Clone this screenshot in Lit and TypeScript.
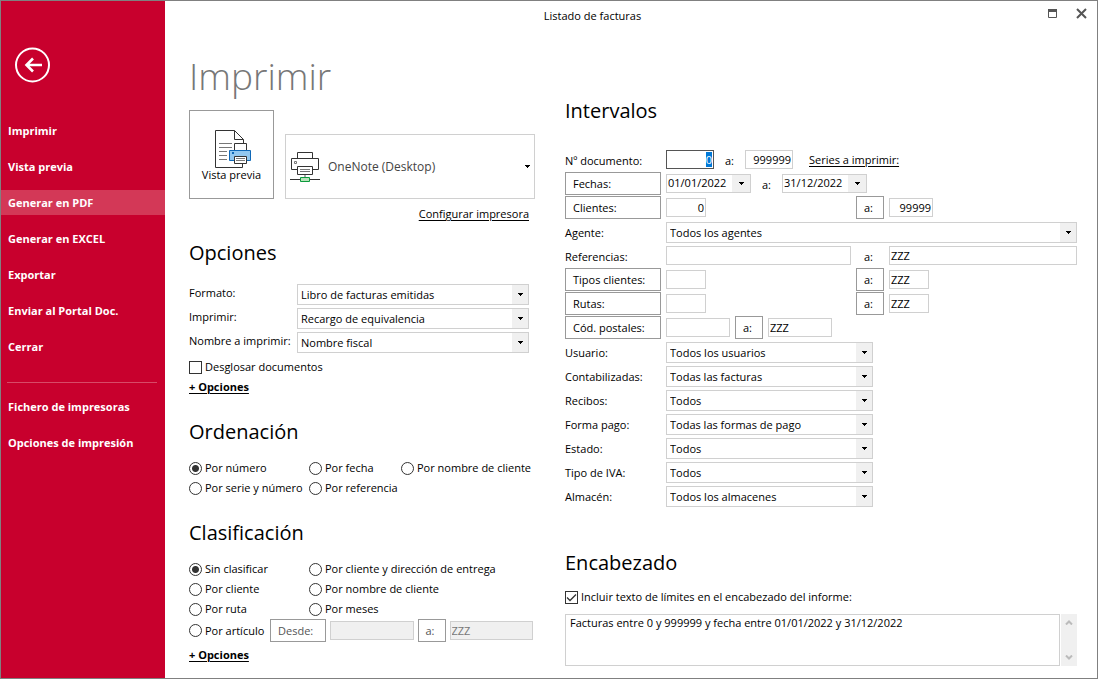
import { LitElement, html, css, svg } from "lit";
import { customElement, state } from "lit/decorators.js";
import { classMap } from "lit/directives/class-map.js";

const previewIcon = svg`<svg class="icon" width="41" height="38" viewBox="-4 0 41 38" fill="none" aria-hidden="true">
  <path d="M28.500 13V9.500L19.500 .500H.500V37.500H27.500V34" stroke="#333" />
  <path d="M19.500 .500V9.500H28.500" stroke="#333" />
  <path d="M4 13.500H17M4 17.500H17M4 21.500H12M4 25.500H12M4 29.500H12" stroke="#777" />
  <path d="M19.500 20.500V13.500H31.500V20.500" stroke="#333" fill="#fff" />
  <path d="M14.500 20.500H35.500V30.500H14.500Z" stroke="#0f68b7" fill="#92c8f0" />
  <path d="M17 22H19V24H17Z" fill="#0f68b7" />
  <path d="M19.500 26.500H31.500V33.500H19.500Z" stroke="#333" fill="#fff" />
  <path d="M21 28.500H30M21 30.500H30" stroke="#777" />
</svg>`;

const printerIcon = svg`<svg class="icon" width="30" height="32" viewBox="0 0 30 32" fill="none" aria-hidden="true">
  <path d="M7.500 7.500V1.500H22.500V7.500" stroke="#333" />
  <path d="M7.500 18.500H1.500V7.500H28.500V18.500H22.500" stroke="#333" />
  <path d="M4.500 10.500H6.500V12.500H4.500Z" stroke="#777" />
  <path d="M7.500 15.500H22.500V23.500H7.500Z" stroke="#333" fill="#fff" />
  <path d="M10 18.500H20M10 20.500H20" stroke="#777" />
  <path d="M15 24V27" stroke="#aaa" stroke-width="2" />
  <path d="M0 28.500H30" stroke="#333" />
  <path d="M10.500 26.500H19.500V30.500H10.500Z" stroke="#0b9a3d" fill="#b9e2ba" />
</svg>`;

@customElement("app-root")
export class AppRoot extends LitElement {
  @state() private active = "Generar en PDF";

  static styles = css`
    :host {
      display: block;
      font-family: "Segoe UI", "Open Sans", "Noto Sans", sans-serif;
      font-size: 11px;
      line-height: 16px;
      color: #000;
    }
    * { box-sizing: border-box; }
    button, input, select, textarea { font: inherit; color: inherit; margin: 0; border-radius: 0; }
    button { cursor: pointer; }
    a { color: #000; text-decoration: underline; text-underline-offset: 2px; }
    .icon { display: block; flex: none; }

    .window {
      display: grid;
      grid-template-columns: 164px minmax(0, 1fr);
      min-height: 100vh;
      border: 1px solid #808080;
      background: #fff;
    }

    .side { background: #c8002d; color: #fff; padding-top: 46px; }
    .back { display: block; margin-left: 13px; padding: 0; border: 0; background: none; }
    .menu { display: flex; flex-direction: column; gap: 11px; }
    .menu.first { margin-top: 35px; }
    .menu.second { margin-top: 11px; }
    .item {
      height: 25px;
      padding: 0 7px;
      border: 0;
      background: none;
      text-align: left;
      font-size: 11px;
      font-weight: 700;
    }
    .item.on { background: #d33857; }
    .rule { margin: 23px 8px 0 6px; border: 0; border-top: 1px solid #d84a67; }

    .bar { display: flex; align-items: flex-start; padding: 7px 10px 0 0; height: 47px; }
    .caption { flex: 1; text-align: center; }
    .tools { display: flex; justify-content: flex-end; gap: 18px; width: 67px; }
    .tool { height: 11px; padding: 0; border: 0; background: none; }
    .tool .icon { margin-top: -1px; }

    .columns {
      display: grid;
      grid-template-columns: 352px minmax(0, 1fr);
      gap: 24px;
      padding: 0 20px 12px 24px;
    }
    h1 { margin: 0; font-size: 37px; line-height: 56px; font-weight: 300; color: #777; }
    h2 { margin: 0; font-size: 20px; line-height: 28px; font-weight: 400; }

    .top { display: flex; align-items: flex-end; gap: 11px; margin-top: 6px; margin-right: 6px; }
    .preview {
      display: flex;
      flex-direction: column;
      align-items: center;
      justify-content: center;
      width: 85px;
      height: 89px;
      padding: 2px 0 0;
      border: 1px solid #999;
      background: #fff;
      line-height: 14px;
    }
    .printer {
      flex: 1;
      display: flex;
      align-items: center;
      gap: 4px;
      height: 65px;
      padding-left: 4px;
      border: 1px solid #d0d0d0;
    }
    .printer select { flex: 1; min-width: 0; height: 63px; border: 0; padding: 0 4px; font-size: 12px; color: #444; }
    .config { margin: 7px 12px 0; text-align: right; }

    select {
      appearance: none;
      background: url("data:image/svg+xml,%3Csvg xmlns='http://www.w3.org/2000/svg' width='5' height='3'%3E%3Cpath d='M0 0h5v1H0zM1 1h3v1H1zM2 2h1v1H2z'/%3E%3C/svg%3E") no-repeat right 4px center;
      outline: 0;
    }
    .pick {
      width: 100%;
      height: 21px;
      padding: 0 20px 0 3px;
      border: 1px solid #d0d0d0;
      background:
        url("data:image/svg+xml,%3Csvg xmlns='http://www.w3.org/2000/svg' width='5' height='3'%3E%3Cpath d='M0 0h5v1H0zM1 1h3v1H1zM2 2h1v1H2z'/%3E%3C/svg%3E") no-repeat right 5px center,
        linear-gradient(#f0f0f0, #f0f0f0) no-repeat right center / 16px 100%,
        #fff;
    }
    .options { display: grid; grid-template-columns: 108px 1fr; row-gap: 3px; margin: 17px 12px 0 0; }
    .options label { padding-top: 1px; }
    .check { display: flex; align-items: center; gap: 3px; height: 20px; }
    .check input {
      appearance: none;
      flex: none;
      width: 13px;
      height: 13px;
      border: 1px solid #333;
      background: #fff no-repeat center;
    }
    .check input[type="radio"] { border-radius: 50%; }
    .check input[type="radio"]:checked { background-image: radial-gradient(circle, #333 0 3px, transparent 4px); }
    .check input[type="checkbox"]:checked {
      background-image: url("data:image/svg+xml,%3Csvg xmlns='http://www.w3.org/2000/svg' width='11' height='11' fill='none' stroke='%23333' stroke-width='1.300'%3E%3Cpath d='M1 5.500L4 8.500L10 2.500'/%3E%3C/svg%3E");
    }
    .more { display: block; width: max-content; height: 20px; line-height: 20px; font-weight: 700; }
    .desglosar { margin-top: 4px; }

    .opciones { margin-top: 17px; }
    .block { margin-top: 21px; }
    .order { display: grid; grid-template-columns: 120px 92px 1fr; margin-top: 12px; white-space: nowrap; }
    .group { display: grid; grid-template-columns: 120px 1fr; margin-top: 12px; white-space: nowrap; }
    .article { display: flex; align-items: center; gap: 4px; margin: 0 8px 3px 0; }
    .article .check { width: 77px; white-space: nowrap; }
    .article .field { flex: 1; }

    .push { height: 23px; padding: 0 7px; border: 1px solid #999; background: #fff; text-align: left; white-space: nowrap; }
    .push:disabled { color: #555; }
    .wide { width: 56px; }
    .short { width: 28px; }
    .field {
      width: 100%;
      min-width: 0;
      height: 19px;
      padding: 0 1px 1px;
      border: 1px solid #d0d0d0;
      background: #fff;
      outline: 0;
    }
    .field:disabled { background: #f0f0f0; color: #777; }
    .field:focus { border-color: #555; }
    .field::selection { background: #0078d7; color: #fff; }
    .number { text-align: right; }
    .code { width: 40px; }
    .client { width: 44px; }
    .count { width: 48px; }
    .zone { width: 64px; }

    .ranges { display: flex; flex-direction: column; gap: 1px; margin-top: 23px; }
    .row { display: grid; grid-template-columns: 96px minmax(0, 1fr); column-gap: 5px; align-items: center; height: 23px; }
    .row > label, .row > span, .to { padding-top: 3px; }
    .pair { display: grid; grid-template-columns: 185px 28px minmax(0, 1fr); gap: 5px; align-items: center; }
    .line { display: flex; gap: 5px; align-items: center; }
    .line.loose { gap: 11px; }
    .row .pick { align-self: end; }
    .medium { max-width: 207px; }
    .pair .to { padding-left: 8px; }
    .date { display: flex; width: 85px; height: 19px; border: 1px solid #d0d0d0; }
    .date input { flex: 1; min-width: 0; padding: 0 1px 1px; border: 0; background: none; outline: 0; }
    .drop { display: grid; place-items: center; width: 18px; padding: 0; border: 0; background: #f0f0f0; }
    .series { margin-left: 5px; }
    .interv { margin-top: 49px; }
    .head { margin-top: 42px; }
    .include { margin-top: 10px; }
    .memo { display: grid; grid-template-columns: minmax(0, 1fr) 16px; gap: 1px; margin-top: 7px; }
    textarea { display: block; height: 52px; padding: 0 4px; border: 1px solid #d0d0d0; resize: none; overflow: hidden; outline: 0; }
    .scroll { display: flex; flex-direction: column; justify-content: space-between; background: #f0f0f0; }
    .scroll button { display: grid; place-items: center; height: 17px; padding: 0; border: 0; background: none; }
  `;

  firstUpdated() {
    const first = this.renderRoot.querySelector<HTMLInputElement>("#doc-from");
    first?.focus();
    first?.select();
  }

  private item(name: string) {
    return html`<button class=${classMap({ item: true, on: this.active === name })}
      @click=${() => (this.active = name)}>${name}</button>`;
  }

  private radio(group: string, label: string, checked = false) {
    return html`<label class="check"><input type="radio" name=${group} ?checked=${checked} />${label}</label>`;
  }

  private option(id: string, label: string, value: string) {
    return html`<label for=${id}>${label}</label>
      <select class="pick" id=${id}><option>${value}</option></select>`;
  }

  private pickRow(id: string, label: string, value: string, full = false) {
    return html`<div class="row"><label for=${id}>${label}</label>
      <select class=${classMap({ pick: true, medium: !full })} id=${id}><option>${value}</option></select></div>`;
  }

  private field(label: string, value = "", kind = "", disabled = false) {
    return html`<input class="field ${kind}" aria-label=${label} .value=${value} ?disabled=${disabled} />`;
  }

  private date(label: string, value: string) {
    return html`<span class="date"><input aria-label=${label} .value=${value} />
      <button class="drop" aria-label="Calendario"><svg width="5" height="3" aria-hidden="true"><path d="M0 0h5v1H0zM1 1h3v1H1zM2 2h1v1H2z" /></svg></button></span>`;
  }

  private pairRow(label: string, from: unknown, to: unknown, plain = false) {
    return html`<div class="row">
      ${plain ? html`<span>${label}</span>` : html`<button class="push">${label}</button>`}
      <div class="pair">${from}
        ${plain ? html`<span class="to">a:</span>` : html`<button class="push short">a:</button>`}${to}</div>
    </div>`;
  }

  render() {
    return html`<div class="window">
      <nav class="side">
        <button class="back" aria-label="Volver">
          <svg class="icon" width="37" height="36" viewBox="0 0 37 36" fill="none" stroke="#fff" stroke-width="2">
            <circle cx="18.500" cy="18" r="16.500" />
            <path d="M12 18H28M19 11.500L12.500 18L19 24.500" stroke-width="2.600" />
          </svg>
        </button>
        <div class="menu first">
          ${["Imprimir", "Vista previa", "Generar en PDF", "Generar en EXCEL", "Exportar", "Enviar al Portal Doc.", "Cerrar"].map((n) => this.item(n))}
        </div>
        <hr class="rule" />
        <div class="menu second">${["Fichero de impresoras", "Opciones de impresión"].map((n) => this.item(n))}</div>
      </nav>

      <main>
        <header class="bar">
          <span class="caption">Listado de facturas</span>
          <span class="tools">
            <button class="tool" aria-label="Maximizar">
              <svg class="icon" width="11" height="11" fill="none" stroke="#555"><path d="M1.500 1.500H9.500V9.500H1.500Z" /><path d="M1 2.500H10" stroke-width="3" /></svg>
            </button>
            <button class="tool" aria-label="Cerrar ventana">
              <svg class="icon" width="11" height="11" fill="none" stroke="#555" stroke-width="2"><path d="M1 1L10 10M10 1L1 10" /></svg>
            </button>
          </span>
        </header>

        <div class="columns">
          <div>
            <h1>Imprimir</h1>
            <div class="top">
              <button class="preview">${previewIcon}<span>Vista previa</span></button>
              <div class="printer">${printerIcon}
                <select aria-label="Impresora"><option>OneNote (Desktop)</option></select>
              </div>
            </div>
            <div class="config"><a href="#">Configurar impresora</a></div>

            <h2 class="opciones">Opciones</h2>
            <div class="options">
              ${this.option("formato", "Formato:", "Libro de facturas emitidas")}
              ${this.option("imprimir", "Imprimir:", "Recargo de equivalencia")}
              ${this.option("nombre", "Nombre a imprimir:", "Nombre fiscal")}
            </div>
            <label class="check desglosar"><input type="checkbox" />Desglosar documentos</label>
            <a class="more" href="#">+ Opciones</a>

            <h2 class="block">Ordenación</h2>
            <div class="order">
              ${this.radio("orden", "Por número", true)}
              ${this.radio("orden", "Por fecha")}
              ${this.radio("orden", "Por nombre de cliente")}
              ${this.radio("orden", "Por serie y número")}
              ${this.radio("orden", "Por referencia")}
            </div>

            <h2 class="block">Clasificación</h2>
            <div class="group">
              ${this.radio("clase", "Sin clasificar", true)}
              ${this.radio("clase", "Por cliente y dirección de entrega")}
              ${this.radio("clase", "Por cliente")}
              ${this.radio("clase", "Por nombre de cliente")}
              ${this.radio("clase", "Por ruta")}
              ${this.radio("clase", "Por meses")}
            </div>
            <div class="article">
              ${this.radio("clase", "Por artículo")}
              <button class="push wide" disabled>Desde:</button>
              ${this.field("Artículo desde", "", "", true)}
              <button class="push short" disabled>a:</button>
              ${this.field("Artículo hasta", "ZZZ", "", true)}
            </div>
            <a class="more" href="#">+ Opciones</a>
          </div>

          <div>
            <h2 class="interv">Intervalos</h2>
            <div class="ranges">
              <div class="row"><label for="doc-from">Nº documento:</label>
                <div class="line loose">
                  <input class="field number count" id="doc-from" .value=${"0"} />
                  <span class="to">a:</span>${this.field("Documento hasta", "999999", "number count")}
                  <a class="series" href="#">Series a imprimir:</a>
                </div>
              </div>
              <div class="row"><button class="push">Fechas:</button>
                <div class="line loose">${this.date("Fecha desde", "01/01/2022")}<span class="to">a:</span>${this.date("Fecha hasta", "31/12/2022")}</div>
              </div>
              ${this.pairRow("Clientes:", this.field("Cliente desde", "0", "number code"), this.field("Cliente hasta", "99999", "number client"))}
              ${this.pickRow("agente", "Agente:", "Todos los agentes", true)}
              ${this.pairRow("Referencias:", this.field("Referencia desde"), this.field("Referencia hasta", "ZZZ"), true)}
              ${this.pairRow("Tipos clientes:", this.field("Tipo desde", "", "code"), this.field("Tipo hasta", "ZZZ", "code"))}
              ${this.pairRow("Rutas:", this.field("Ruta desde", "", "code"), this.field("Ruta hasta", "ZZZ", "code"))}
              <div class="row"><button class="push">Cód. postales:</button>
                <div class="line">${this.field("Código desde", "", "zone")}<button class="push short">a:</button>${this.field("Código hasta", "ZZZ", "zone")}</div>
              </div>
              ${this.pickRow("usuario", "Usuario:", "Todos los usuarios")}
              ${this.pickRow("contab", "Contabilizadas:", "Todas las facturas")}
              ${this.pickRow("recibos", "Recibos:", "Todos")}
              ${this.pickRow("pago", "Forma pago:", "Todas las formas de pago")}
              ${this.pickRow("estado", "Estado:", "Todos")}
              ${this.pickRow("iva", "Tipo de IVA:", "Todos")}
              ${this.pickRow("almacen", "Almacén:", "Todos los almacenes")}
            </div>

            <h2 class="head">Encabezado</h2>
            <label class="check include"><input type="checkbox" checked />Incluir texto de límites en el encabezado del informe:</label>
            <div class="memo">
              <textarea aria-label="Texto del encabezado" .value=${"Facturas entre 0 y 999999 y fecha entre 01/01/2022 y 31/12/2022"}></textarea>
              <div class="scroll">
                <button aria-label="Subir"><svg width="8" height="5" fill="none" stroke="#bbb" stroke-width="2"><path d="M1 4.500L4 1.500L7 4.500" /></svg></button>
                <button aria-label="Bajar"><svg width="8" height="5" fill="none" stroke="#bbb" stroke-width="2"><path d="M1 .500L4 3.500L7 .500" /></svg></button>
              </div>
            </div>
          </div>
        </div>
      </main>
    </div>`;
  }
}
